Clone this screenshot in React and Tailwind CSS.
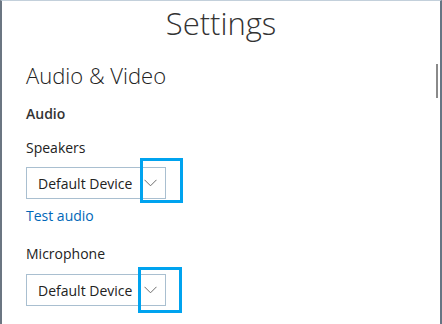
import React from 'react';

function Chevron() {
  return (
    <svg width="13" height="8" viewBox="0 0 13 8" fill="none" className="shrink-0">
      <path d="M0.5 0.8 L6.5 6.8 L12.5 0.8" stroke="#6d6d6d" strokeWidth="1" />
    </svg>
  );
}

function DeviceSelect({ label, mark }) {
  return (
    <div className="relative w-[140px]">
      <div className="flex items-center h-[32px] border border-[#a9bfd0] pl-[11px] pr-[8px] justify-between">
        <span className="text-[14px] text-[#222]">{label}</span>
        <Chevron />
      </div>
      <div className={`absolute border-[3px] border-[#00a3ef] ${mark}`} />
    </div>
  );
}

export default function App() {
  return (
    <div
      className="relative w-[442px] h-[324px] overflow-hidden bg-white border-t border-t-[#c3d0db] border-l-2 border-l-[#6b7682] border-r-2 border-r-[#667584] text-[#222]"
      style={{ fontFamily: '"Open Sans", "Noto Sans", sans-serif' }}
    >
      <div className="text-center text-[31px] font-light leading-none pt-[7px] text-[#333]">Settings</div>
      <div className="absolute right-[2px] top-[63px] w-[2px] h-[34px] bg-[#8a8a8a]" />
      <div className="pl-[24px] pt-[25px]">
        <div className="text-[22px] font-light leading-none text-[#222]">Audio &amp; Video</div>
        <div className="mt-[21px] text-[14px] font-semibold leading-none text-[#333]">Audio</div>
        <div className="mt-[20px] text-[14px] leading-none">Speakers</div>
        <div className="mt-[12px]">
          <DeviceSelect label="Default Device" mark="left-[114px] top-[-9px] w-[43px] h-[45px]" />
        </div>
        <div className="mt-[10px] text-[14px] leading-none text-[#0067b8]">Test audio</div>
        <div className="mt-[24px] text-[14px] leading-none">Microphone</div>
        <div className="mt-[13px]">
          <DeviceSelect label="Default Device" mark="left-[112px] top-[-7px] w-[44px] h-[46px]" />
        </div>
      </div>
    </div>
  );
}
